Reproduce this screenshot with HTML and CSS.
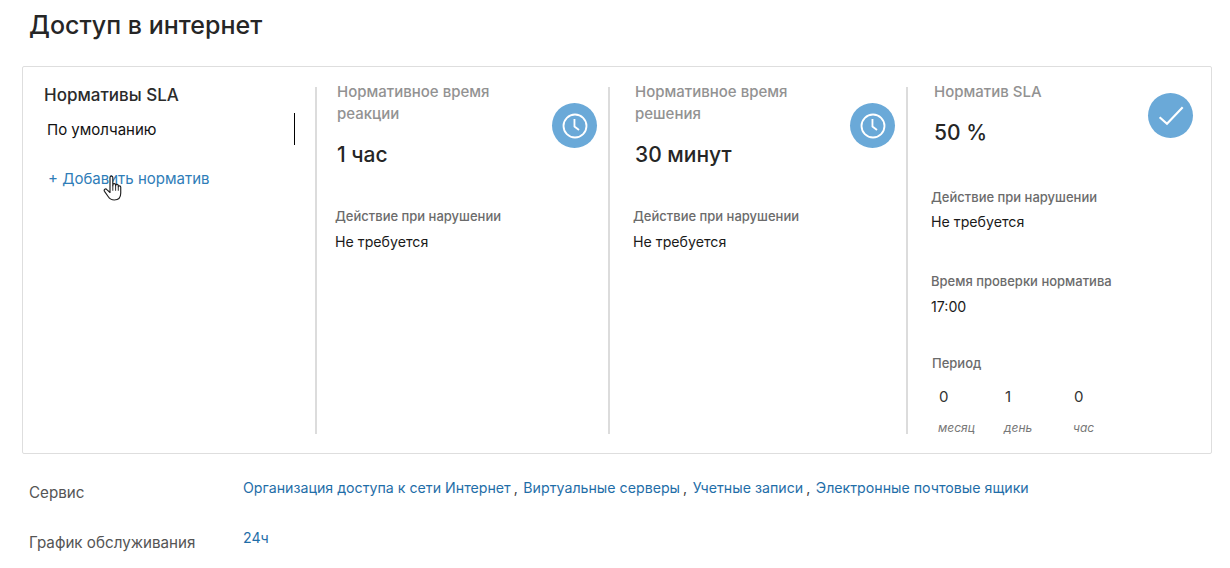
FILE: index.html
```html
<!DOCTYPE html>
<html lang="ru">
<head>
<meta charset="utf-8">
<title>Доступ в интернет</title>
<link rel="stylesheet" href="styles.css">
</head>
<body>
<h1 class="title">Доступ в интернет</h1>
<section class="card">
  <div class="col col-list">
    <h2 class="list-title">Нормативы SLA</h2>
    <div class="list-item"><span>По умолчанию</span></div>
    <div class="add-wrap">
      <a class="add">+ Добавить норматив</a>
      <svg class="cursor" viewBox="0 0 18 24" width="21" height="28"><path d="M6 2.2c0-1.6 2.4-1.6 2.4 0v7l.1-1c.3-1.2 2.2-1.1 2.3.2v1l.1-.6c.3-1.2 2.1-1 2.2.2v1c.3-1 2-.9 2.1.4v5c0 3.5-2 6-5.500 6-2.800 0-4-1-5.300-3L1.300 14c-.9-1.400.9-2.700 2-1.500L6 15z" fill="#fff" stroke="#222" stroke-width="1" stroke-linejoin="round"/><path d="M8.400 9v4.500M10.800 9.500v4M13.100 10.200v3.300" stroke="#222" stroke-width=".8" fill="none"/></svg>
    </div>
  </div>
  <div class="col col-a">
    <div class="head">
      <div class="head-text">
        <div class="metric-label">Нормативное время реакции</div>
        <div class="metric-value">1 час</div>
      </div>
      <span class="badge"><svg viewBox="0 0 24 24" width="26" height="26"><circle cx="12" cy="12" r="10.600" fill="none" stroke="#fff" stroke-width="1.700"/><path d="M11.500 5.500v7l4.200 3.200" fill="none" stroke="#fff" stroke-width="1.700"/></svg></span>
    </div>
    <div class="field field-first">
      <div class="field-label">Действие при нарушении</div>
      <div class="field-value">Не требуется</div>
    </div>
  </div>
  <div class="col col-b">
    <div class="head">
      <div class="head-text">
        <div class="metric-label">Нормативное время решения</div>
        <div class="metric-value">30 минут</div>
      </div>
      <span class="badge"><svg viewBox="0 0 24 24" width="26" height="26"><circle cx="12" cy="12" r="10.600" fill="none" stroke="#fff" stroke-width="1.700"/><path d="M11.500 5.500v7l4.200 3.200" fill="none" stroke="#fff" stroke-width="1.700"/></svg></span>
    </div>
    <div class="field field-first">
      <div class="field-label">Действие при нарушении</div>
      <div class="field-value">Не требуется</div>
    </div>
  </div>
  <div class="col col-c">
    <div class="head head-sla">
      <div class="head-text">
        <div class="metric-label">Норматив SLA</div>
        <div class="metric-value metric-value-sla">50 %</div>
      </div>
      <span class="badge"><svg viewBox="0 0 24 24" width="26" height="26"><path d="M1.500 13.200l6.800 6L22.800 4" fill="none" stroke="#fff" stroke-width="2"/></svg></span>
    </div>
    <div class="field field-sla">
      <div class="field-label">Действие при нарушении</div>
      <div class="field-value field-value-tight">Не требуется</div>
    </div>
    <div class="field field-time">
      <div class="field-label">Время проверки норматива</div>
      <div class="field-value">17:00</div>
    </div>
    <div class="period">
      <div class="field-label">Период</div>
      <div class="period-grid">
        <span class="period-num">0</span><span class="period-num">1</span><span class="period-num">0</span>
        <em class="period-unit">месяц</em><em class="period-unit">день</em><em class="period-unit">час</em>
      </div>
    </div>
  </div>
</section>
<div class="row row-service">
  <div class="row-label">Сервис</div>
  <div class="row-links"><a>Организация доступа к сети Интернет</a><span class="sep">,</span><a>Виртуальные серверы</a><span class="sep">,</span><a>Учетные записи</a><span class="sep">,</span><a>Электронные почтовые ящики</a></div>
</div>
<div class="row row-schedule">
  <div class="row-label">График обслуживания</div>
  <div class="row-links"><a>24ч</a></div>
</div>
</body>
</html>
```
FILE: styles.css
```css
* { box-sizing: border-box; }
html, body { margin: 0; height: 568px; overflow: hidden; }
body { background: #fff; font-family: Inter, "Liberation Sans", sans-serif; color: #000; padding: 0 18px 0 22px; }
.title { margin: 0; padding: 9px 0 0 7px; height: 66px; font-size: 25px; line-height: 32px; font-weight: 500; color: #262626; }
.card { width: 1190px; height: 388px; border: 1px solid #dedede; border-radius: 2px; display: flex; padding: 20px 0 19px; }
.col { height: 347px; flex: none; }
.col-list { width: 292px; padding: 0 21px; }
.col-a, .col-b, .col-c { border-left: 2px solid #dcdcdc; }
.col-a { width: 293px; padding-left: 18px; }
.col-b { width: 298px; padding-left: 23px; }
.col-c { width: 300px; padding-left: 23px; }
.list-title { margin: -1px 0 0; font-size: 17px; line-height: 18px; font-weight: 500; color: #2b2b2b; }
.list-item { margin: 9px 0 0; height: 32px; border-right: 1px solid #000; width: 251px; padding-left: 3px; font-size: 15px; line-height: 34px; color: #111; display: block; }
.add-wrap { position: relative; margin: 24px 0 0 4px; }
.add { font-size: 15px; line-height: 20px; color: #2f7db8; display: block; }
.cursor { position: absolute; left: 55px; top: 6px; }
.head { display: flex; justify-content: space-between; width: 262px; }
.head-text { padding-left: 2px; width: 200px; }
.metric-label { margin-top: -6px; font-size: 15px; line-height: 22px; font-weight: 500; color: #929292; }
.metric-value { margin-top: 16px; font-size: 21px; line-height: 28px; font-weight: 500; color: #262626; }
.metric-value-sla { margin-top: 16px; }
.badge { width: 45px; height: 45px; margin-top: 16px; border-radius: 50%; background: #6aa9d8; display: flex; align-items: center; justify-content: center; flex: none; }
.col-c .badge { margin-top: 6px; }
.col-c .head-text { padding-left: 3px; }
.field-label { font-size: 13px; line-height: 18px; font-weight: 500; color: #6b6b6b; }
.field-value { margin-top: 7px; font-size: 14.2px; line-height: 20px; color: #1a1a1a; }
.field-value-tight { margin-top: 6px; }
.field-first { margin-top: 38px; }
.field-sla { margin-top: 41px; }
.field-time { margin-top: 40px; }
.period { margin-top: 37px; padding-left: 1px; }
.period-grid { display: grid; grid-template-columns: 66px 69px 60px; padding-left: 7px; margin-top: 14px; }
.period-num { font-size: 15px; line-height: 22px; color: #333; }
.period-unit { margin-top: 12px; margin-left: -1px; font-size: 12px; line-height: 16px; color: #777; }
.row { display: flex; padding-left: 7px; }
.row-label { width: 214px; font-size: 15.2px; line-height: 20px; color: #555; padding-top: 5px; flex: none; }
.row-links { font-size: 14.2px; line-height: 20px; color: #1f6ea8; }
.row-links a { color: #1f6ea8; }
.sep { color: #444; margin: 0 5.5px 0 3px; }
.row-service { margin-top: 24px; }
.row-schedule { margin-top: 25px; }
```
